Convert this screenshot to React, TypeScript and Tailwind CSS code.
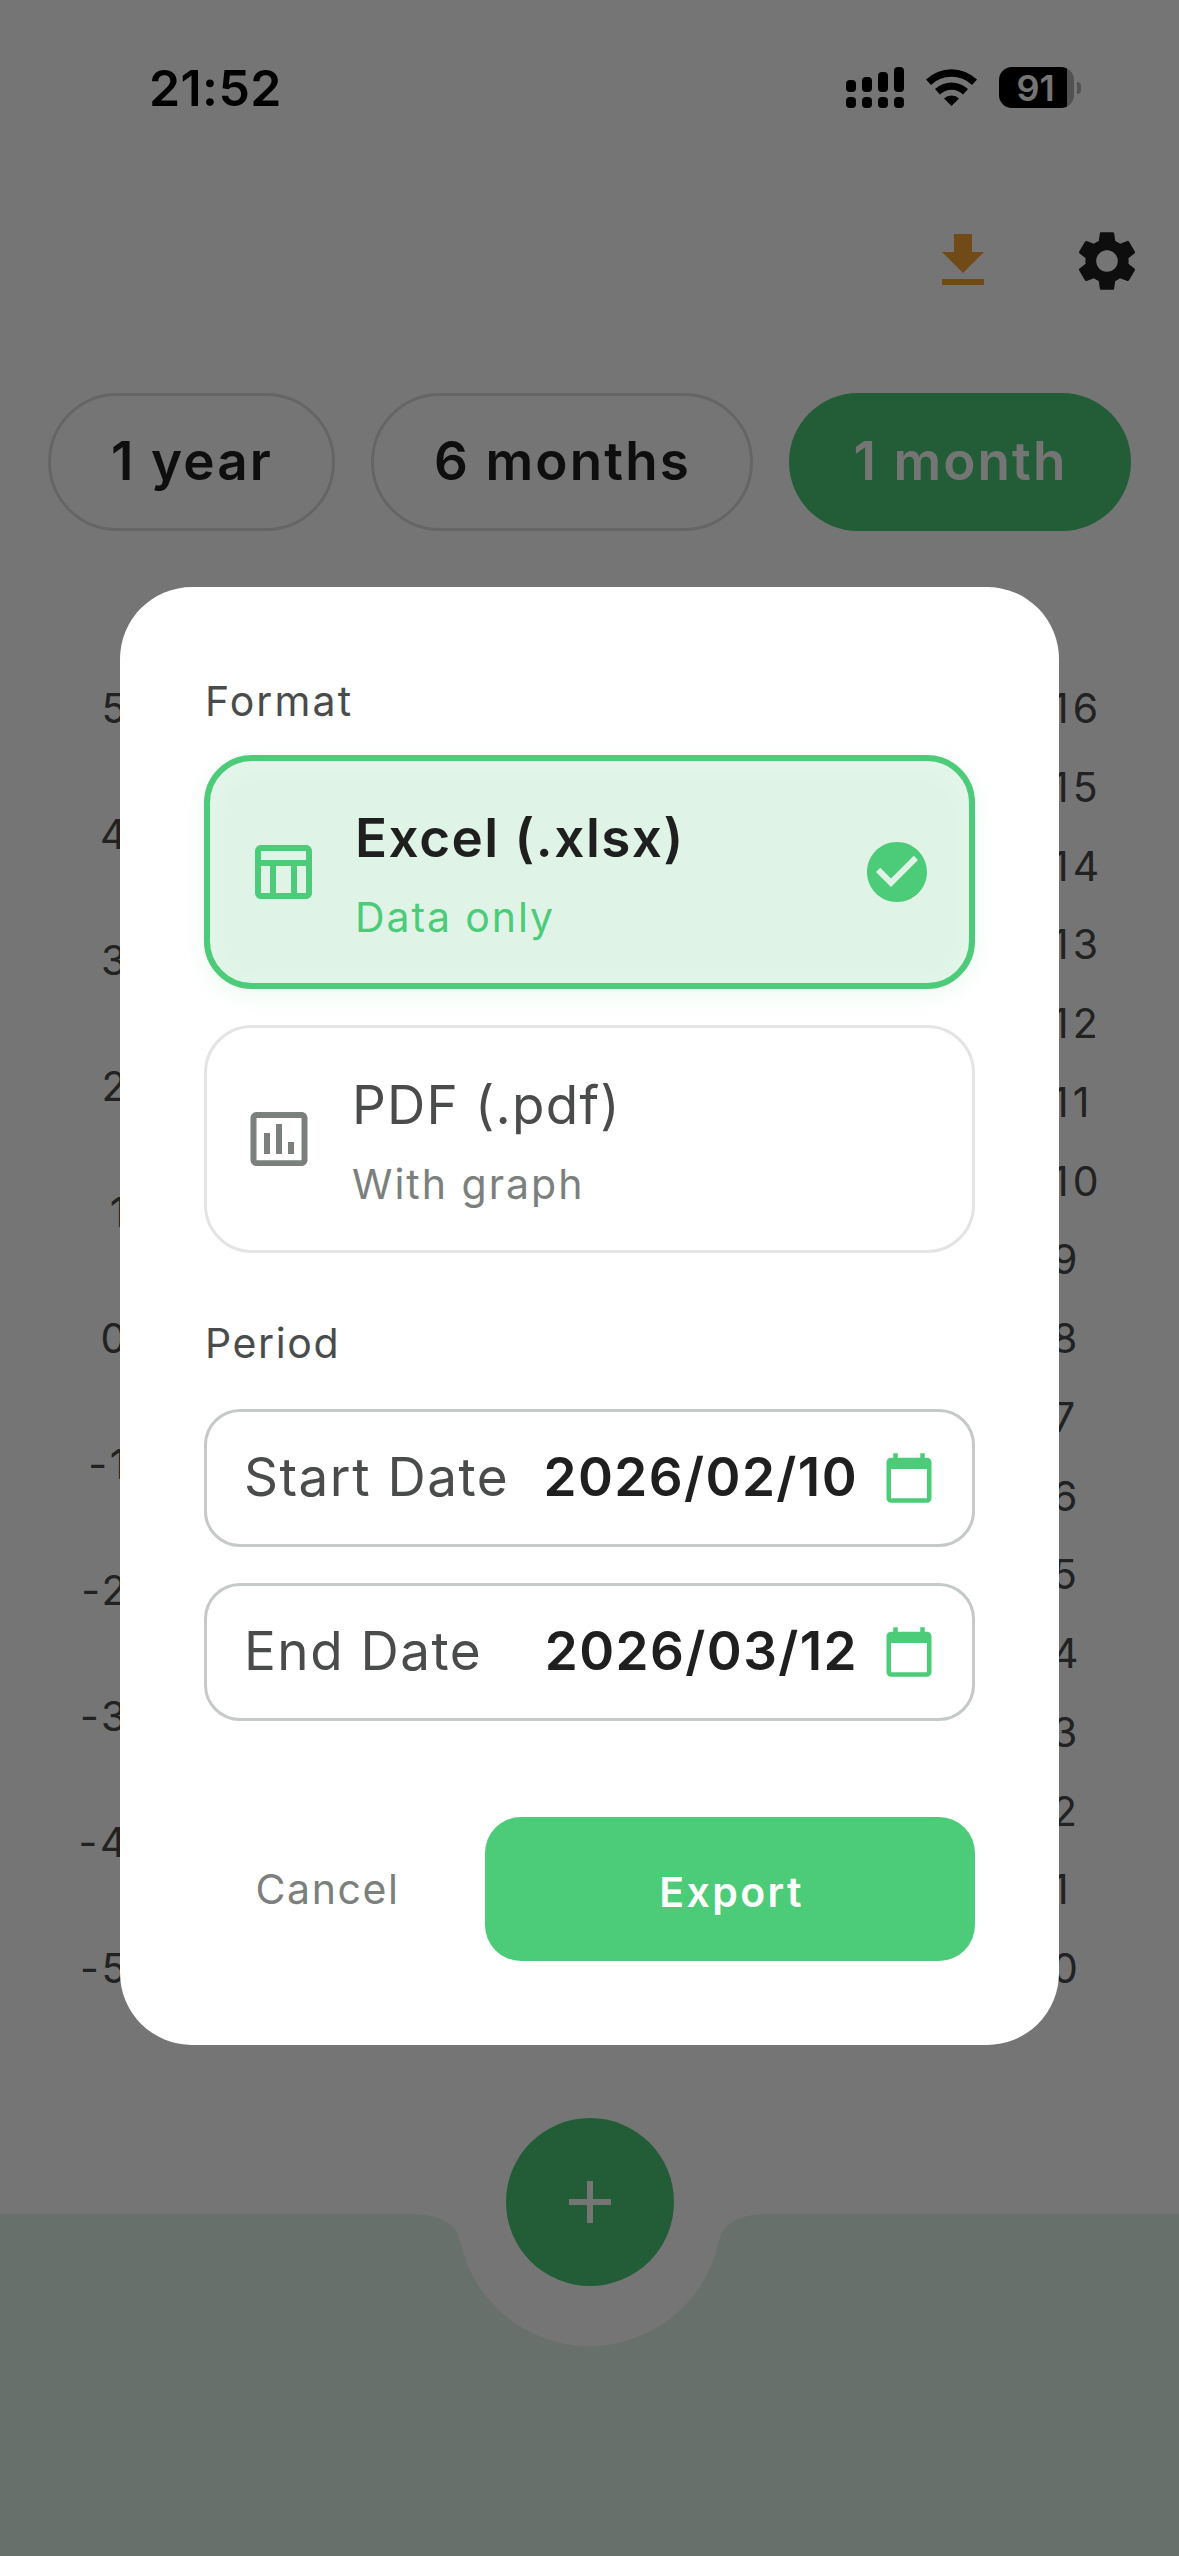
import React from "react";
import {
  MdAdd,
  MdCalendarToday,
  MdCheckCircle,
  MdFileDownload,
  MdInsertChartOutlined,
  MdOutlineTableChart,
  MdSettings,
} from "react-icons/md";

const ranges = [
  { label: "1 year", active: false, width: "w-[287px]" },
  { label: "6 months", active: false, width: "w-[382px]" },
  { label: "1 month", active: true, width: "w-[342px]" },
];

const leftAxis = [5, 4, 3, 2, 1, 0, -1, -2, -3, -4, -5];
const rightAxis = [16, 15, 14, 13, 12, 11, 10, 9, 8, 7, 6, 5, 4, 3, 2, 1, 0];

const dates = [
  { label: "Start Date", value: "2026/02/10" },
  { label: "End Date", value: "2026/03/12" },
];

const signalBars = ["h-3", "h-[15px]", "h-5", "h-[25px]"];

function StatusBar() {
  return (
    <div className="flex h-[175px] items-center justify-between pl-[149px] pr-[98px]">
      <span className="pt-px text-[50px] leading-none font-semibold tracking-[0.4px] text-black">21:52</span>
      <div className="flex items-center">
        <div className="flex items-end gap-1.5">
          {signalBars.map((h) => (
            <div key={h} className="flex flex-col gap-[5px]">
              <div className={`w-2.5 rounded-[4px] bg-black ${h}`} />
              <div className="h-[11px] w-2.5 rounded-[4px] bg-black" />
            </div>
          ))}
        </div>
        <svg className="ml-[22px] h-[37px] w-[51px]" viewBox="0 0 51 37">
          <path d="M0 10.500A37 37 0 0 1 51 10.500L46 16A29.500 29.500 0 0 0 5 16Z" />
          <path d="M9 20A24 24 0 0 1 42 20L37 25.500A16.500 16.500 0 0 0 14 25.500Z" />
          <path d="M18 29.500A11 11 0 0 1 33 29.500L25.500 37Z" />
        </svg>
        <div className="ml-[22px] flex h-[41px] w-[75px] items-center justify-center overflow-hidden rounded-[13px] bg-[linear-gradient(90deg,#000_68px,rgba(0,0,0,0.3)_68px)]">
          <span className="pr-0.5 text-[36px] leading-none font-semibold text-white">91</span>
        </div>
        <div className="ml-[3px] h-3 w-1 rounded-r-full bg-black/30" />
      </div>
    </div>
  );
}

function Toolbar() {
  return (
    <div className="flex h-[171px] items-center justify-end gap-[72px] pr-9">
      <MdFileDownload size={72} className="text-[#f3a336]" />
      <MdSettings size={72} className="text-[#1f1f1f]" />
    </div>
  );
}

function RangeTabs() {
  return (
    <div className="mt-[47px] flex gap-9 pl-12">
      {ranges.map((r) => (
        <div
          key={r.label}
          className={`flex h-[138px] shrink-0 items-center justify-center rounded-full pb-[2px] pl-px text-[53px] leading-none font-[560] tracking-[2.1px] ${r.width} ${
            r.active ? "bg-[#4ccb78] text-white" : "border-[3px] border-[#dbdddc] text-[#1f1f1f]"
          }`}
        >
          {r.label}
        </div>
      ))}
    </div>
  );
}

function ChartAxes() {
  return (
    <div className="mt-[114px] flex h-[1387px] justify-between text-[41px] text-[#4a4a4a]">
      <div className="flex w-[129px] flex-col text-right tracking-[2.6px]">
        {leftAxis.map((n) => (
          <span key={n} className="h-[126px] leading-[126px]">{n}</span>
        ))}
      </div>
      <div className="flex w-[127px] flex-col pt-6 tracking-[4px]">
        {rightAxis.map((n) => (
          <span key={n} className="h-[78.75px] shrink-0 leading-[78.75px]">{n}</span>
        ))}
      </div>
    </div>
  );
}

function BottomBar() {
  return (
    <div className="relative mt-auto h-[342px]">
      <svg className="block h-full w-full" viewBox="0 0 1179 342">
        <path
          d="M0 0H409.500Q454.500 0 460.400 27.700A132 132 0 0 0 718.600 27.700Q724.500 0 769.500 0H1179V342H0Z"
          fill="#e2f3e9"
        />
      </svg>
      <div className="absolute -top-24 left-[505.5px] flex h-[168px] w-[168px] items-center justify-center rounded-full bg-[#4ccb78]">
        <MdAdd size={72} className="text-white" />
      </div>
    </div>
  );
}

function ExportDialog() {
  return (
    <div className="flex h-[1458px] w-[939px] flex-col rounded-[72px] bg-white px-[84px] pt-[84px] text-[#4a4c4b]">
      <h2 className="h-[84px] pl-px text-[41px] leading-[60px] tracking-[2.1px]">Format</h2>

      <div className="flex h-[234px] items-center rounded-[48px] border-[6px] border-[#4ccb78] bg-[#dff4e7] px-9 shadow-[0_6px_24px_rgba(76,203,120,0.1),inset_0_6px_24px_rgba(255,255,255,0.25)]">
        <MdOutlineTableChart size={72} className="text-[#4ccb78]" />
        <div className="ml-[37px] flex-1 pb-[2px]">
          <div className="text-[53px] leading-[92px] font-semibold tracking-[1.5px] text-[#1f1f1f]">Excel (.xlsx)</div>
          <div className="text-[41px] leading-[66px] tracking-[1.9px] text-[#4ccb78]">Data only</div>
        </div>
        <MdCheckCircle size={72} className="text-[#4ccb78]" />
      </div>

      <div className="mt-9 flex h-[228px] items-center rounded-[48px] border-[3px] border-[#e3e4e3] px-9">
        <MdInsertChartOutlined size={72} className="text-[#7b807d]" />
        <div className="ml-[37px] flex-1 pb-[2px]">
          <div className="text-[53px] leading-[92px] tracking-[1.2px]">PDF (.pdf)</div>
          <div className="text-[41px] leading-[66px] tracking-[2px] text-[#7b807d]">With graph</div>
        </div>
      </div>

      <h2 className="mt-[60px] mb-[36px] pl-px text-[41px] leading-[60px] tracking-[1.6px]">Period</h2>

      <div className="flex flex-col gap-9">
        {dates.map((d) => (
          <div
            key={d.label}
            className="flex h-[138px] items-center rounded-[36px] border-[3px] border-[#c5c9c7] px-9 text-[53px] leading-none"
          >
            <span className="pl-px tracking-[1.5px]">{d.label}</span>
            <span className="ml-auto font-semibold tracking-[1.4px] text-[#1f1f1f]">{d.value}</span>
            <MdCalendarToday size={54} className="ml-6 text-[#4ccb78]" />
          </div>
        ))}
      </div>

      <div className="mt-24 flex h-36 gap-9 text-[41px] leading-none">
        <button className="flex-1 pt-[2px] pl-[2px] tracking-[1.6px] text-[#7b807d]">Cancel</button>
        <button className="w-[490px] rounded-[36px] bg-[#4ccb78] pt-[7px] pl-[3px] font-semibold tracking-[2.4px] text-white">
          Export
        </button>
      </div>
    </div>
  );
}

export default function App() {
  return (
    <div className="relative h-[2556px] w-[1179px] overflow-hidden bg-white font-['Inter',sans-serif]">
      <div className="flex h-full flex-col">
        <StatusBar />
        <Toolbar />
        <RangeTabs />
        <ChartAxes />
        <BottomBar />
      </div>

      {/* modal barrier */}
      <div className="absolute inset-0 flex justify-center bg-black/54 pt-[586.5px]">
        <ExportDialog />
      </div>
    </div>
  );
}
